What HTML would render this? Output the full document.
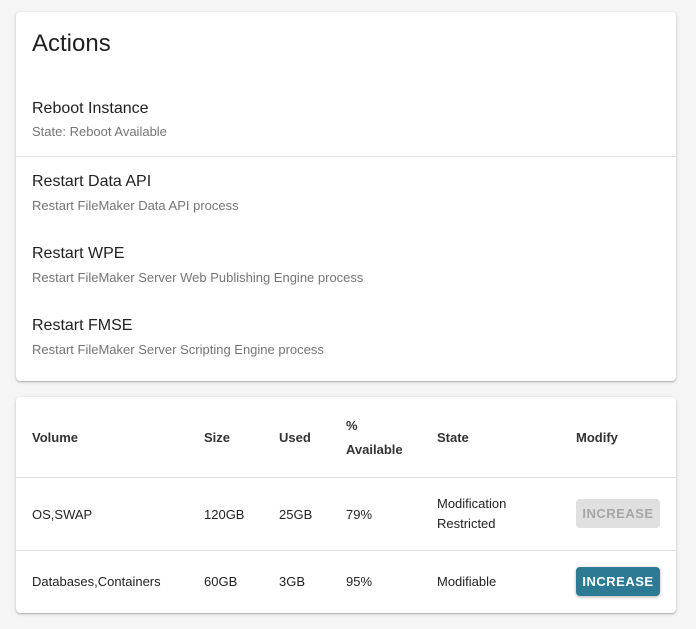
<!DOCTYPE html><html><head><style>
body{margin:0;background:#f5f5f5;font-family:"Liberation Sans",sans-serif;width:696px;height:629px;position:relative;overflow:hidden}
.card{position:absolute;left:16px;width:660px;background:#fff;border-radius:4px;box-shadow:0 1px 3px rgba(0,0,0,.2),0 1px 1px rgba(0,0,0,.14)}
.a{position:absolute;white-space:nowrap}
.t{font-size:16px;color:#212121}
.s{font-size:14px;color:#757575}
.h{font-size:13px;font-weight:bold;color:#333}
.c{font-size:13px;color:#222}
.line{position:absolute;left:0;right:0;height:1px;background:#e0e0e0}
.btn{position:absolute;left:560px;width:84px;height:29px;border-radius:4px;font-size:13px;font-weight:bold;letter-spacing:.5px;text-align:center;line-height:29px}
</style></head><body>
<div class="card" style="top:12px;height:369px">
<div class="a" style="left:16px;top:18px;font-size:24px;color:#212121">Actions</div>
<div class="a t" style="left:16px;top:88px">Reboot Instance</div>
<div class="a s" style="left:16px;top:112px;font-size:13px">State: Reboot Available</div>
<div class="line" style="top:144px"></div>
<div class="a t" style="left:16px;top:161px">Restart Data API</div>
<div class="a s" style="left:16px;top:186px;font-size:13px">Restart FileMaker Data API process</div>
<div class="a t" style="left:16px;top:233px">Restart WPE</div>
<div class="a s" style="left:16px;top:258px;font-size:13px">Restart FileMaker Server Web Publishing Engine process</div>
<div class="a t" style="left:16px;top:305px">Restart FMSE</div>
<div class="a s" style="left:16px;top:330px;font-size:13px">Restart FileMaker Server Scripting Engine process</div>
</div>
<div class="card" style="top:397px;height:216px">
<div class="a h" style="left:16px;top:33px">Volume</div>
<div class="a h" style="left:188px;top:33px">Size</div>
<div class="a h" style="left:263px;top:33px">Used</div>
<div class="a h" style="left:330px;top:21px">%</div>
<div class="a h" style="left:330px;top:45px">Available</div>
<div class="a h" style="left:421px;top:33px">State</div>
<div class="a h" style="left:560px;top:33px">Modify</div>
<div class="line" style="top:80px"></div>
<div class="a c" style="left:16px;top:110px">OS,SWAP</div>
<div class="a c" style="left:188px;top:110px">120GB</div>
<div class="a c" style="left:263px;top:110px">25GB</div>
<div class="a c" style="left:330px;top:110px">79%</div>
<div class="a c" style="left:421px;top:99px">Modification</div>
<div class="a c" style="left:421px;top:119px">Restricted</div>
<div class="btn" style="top:102px;background:#e0e0e0;color:#a6a6a6">INCREASE</div>
<div class="line" style="top:153px"></div>
<div class="a c" style="left:16px;top:177px">Databases,Containers</div>
<div class="a c" style="left:188px;top:177px">60GB</div>
<div class="a c" style="left:263px;top:177px">3GB</div>
<div class="a c" style="left:330px;top:177px">95%</div>
<div class="a c" style="left:421px;top:177px">Modifiable</div>
<div class="btn" style="top:170px;background:#2c7a94;color:#fff;box-shadow:0 1px 3px rgba(0,0,0,.3)">INCREASE</div>
</div>
</body></html>
